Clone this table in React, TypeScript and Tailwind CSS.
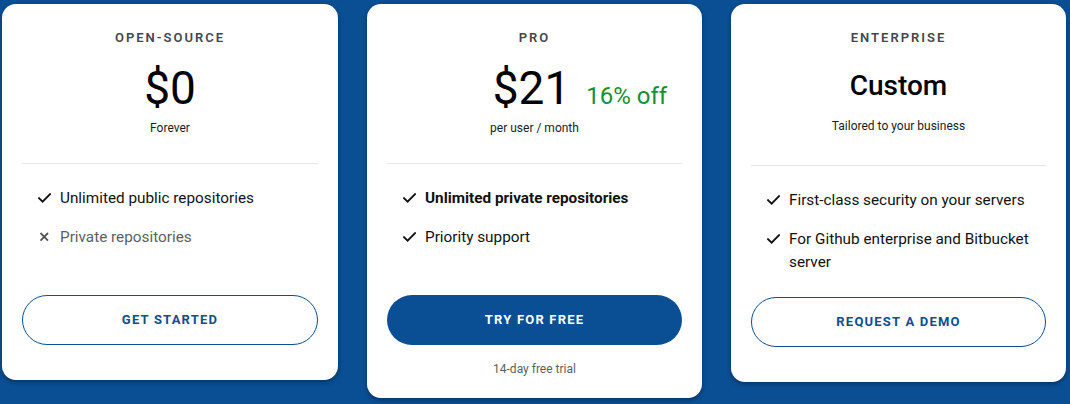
import React from "react";

const Check = () => (
  <svg width="13" height="10" viewBox="0 0 13 10" fill="none" className="shrink-0">
    <path d="M1 5.2 L4.6 8.6 L12 1.2" stroke="#111" strokeWidth="1.9" strokeLinecap="square" />
  </svg>
);

const Cross = () => (
  <svg width="13" height="10" viewBox="0 0 13 10" fill="none" className="shrink-0">
    <path d="M2.5 1 L10 8.6 M10 1 L2.5 8.6" stroke="#555" strokeWidth="1.8" />
  </svg>
);

function Feature({ icon, children, className }: { icon: React.ReactNode; children: React.ReactNode; className: string }) {
  return (
    <li className="flex items-start gap-[9px]">
      <span className="flex h-[22px] items-center">{icon}</span>
      <span className={className}>{children}</span>
    </li>
  );
}

export default function App() {
  return (
    <div
      className="flex h-[404px] w-[1070px] items-start gap-[29px] bg-[#0a4e93] pl-[2px] pt-[4px] overflow-hidden"
      style={{ fontFamily: "Roboto, 'Noto Sans', sans-serif" }}
    >
      {/* Card 1 */}
      <div className="flex w-[336px] flex-col rounded-[14px] bg-white pb-[35px] shadow-[0_2px_4px_rgba(0,0,0,0.35)]">
        <div className="mx-5 flex flex-col items-center border-b border-[#e6e6e6] pt-[26px] pb-[27px]">
          <div className="text-[13px] font-semibold leading-4 tracking-[2px] text-[#43474d]">OPEN-SOURCE</div>
          <div className="mt-[18px] text-[46px] leading-[48px] text-black">$0</div>
          <div className="mt-2 text-[12px] leading-4 text-[#1c1c1c]">Forever</div>
        </div>
        <ul className="flex h-[131px] flex-col gap-[17px] pt-[23px] pl-[36px] pr-5">
          <Feature icon={<Check />} className="text-[15.3px] leading-[22px] text-[#111]">Unlimited public repositories</Feature>
          <Feature icon={<Cross />} className="text-[15.3px] leading-[22px] text-[#5b5f65]">Private repositories</Feature>
        </ul>
        <button className="mx-5 h-[50px] rounded-full border border-[#0a4e93] text-[13px] font-bold tracking-[1.2px] text-[#0a4e93]">
          GET STARTED
        </button>
      </div>

      {/* Card 2 */}
      <div className="flex w-[335px] flex-col rounded-[14px] bg-white pb-[21px] shadow-[0_2px_4px_rgba(0,0,0,0.35)]">
        <div className="mx-5 flex flex-col items-center border-b border-[#e6e6e6] pt-[26px] pb-[27px]">
          <div className="text-[13px] font-semibold leading-4 tracking-[2px] text-[#43474d]">PRO</div>
          <div className="mt-[18px] grid w-full grid-cols-[1fr_auto_1fr] items-baseline pr-[6px]">
            <span />
            <span className="text-[46px] leading-[48px] text-black">$21</span>
            <span className="ml-[16px] text-[24px] leading-[30px] text-[#17902f]">16% off</span>
          </div>
          <div className="mt-2 text-[12px] leading-4 text-[#1c1c1c]">per user / month</div>
        </div>
        <ul className="flex h-[131px] flex-col gap-[17px] pt-[23px] pl-[36px] pr-5">
          <Feature icon={<Check />} className="text-[15.3px] font-bold leading-[22px] text-[#111]">Unlimited private repositories</Feature>
          <Feature icon={<Check />} className="text-[15.3px] leading-[22px] text-[#111]">Priority support</Feature>
        </ul>
        <button className="mx-5 h-[50px] rounded-full bg-[#0a4e93] text-[13px] font-bold tracking-[1.2px] text-white">
          TRY FOR FREE
        </button>
        <div className="mt-4 text-center text-[12px] leading-4 text-[#5b5f65]">14-day free trial</div>
      </div>

      {/* Card 3 */}
      <div className="flex w-[335px] flex-col rounded-[14px] bg-white pb-[35px] shadow-[0_2px_4px_rgba(0,0,0,0.35)]">
        <div className="mx-5 flex flex-col items-center border-b border-[#e6e6e6] pt-[26px] pb-[31px]">
          <div className="text-[13px] font-semibold leading-4 tracking-[2px] text-[#43474d]">ENTERPRISE</div>
          <div className="mt-[18px] text-[28px] font-medium leading-[44px] text-black">Custom</div>
          <div className="mt-[10px] text-[12px] leading-4 text-[#1c1c1c]">Tailored to your business</div>
        </div>
        <ul className="flex h-[131px] flex-col gap-[17px] pt-[23px] pl-[36px] pr-5">
          <Feature icon={<Check />} className="text-[15.3px] leading-[22px] text-[#111]">First-class security on your servers</Feature>
          <Feature icon={<Check />} className="text-[15.3px] leading-[23px] text-[#111]">For Github enterprise and Bitbucket server</Feature>
        </ul>
        <button className="mx-5 h-[50px] rounded-full border border-[#0a4e93] text-[13px] font-bold tracking-[1.2px] text-[#0a4e93]">
          REQUEST A DEMO
        </button>
      </div>
    </div>
  );
}
